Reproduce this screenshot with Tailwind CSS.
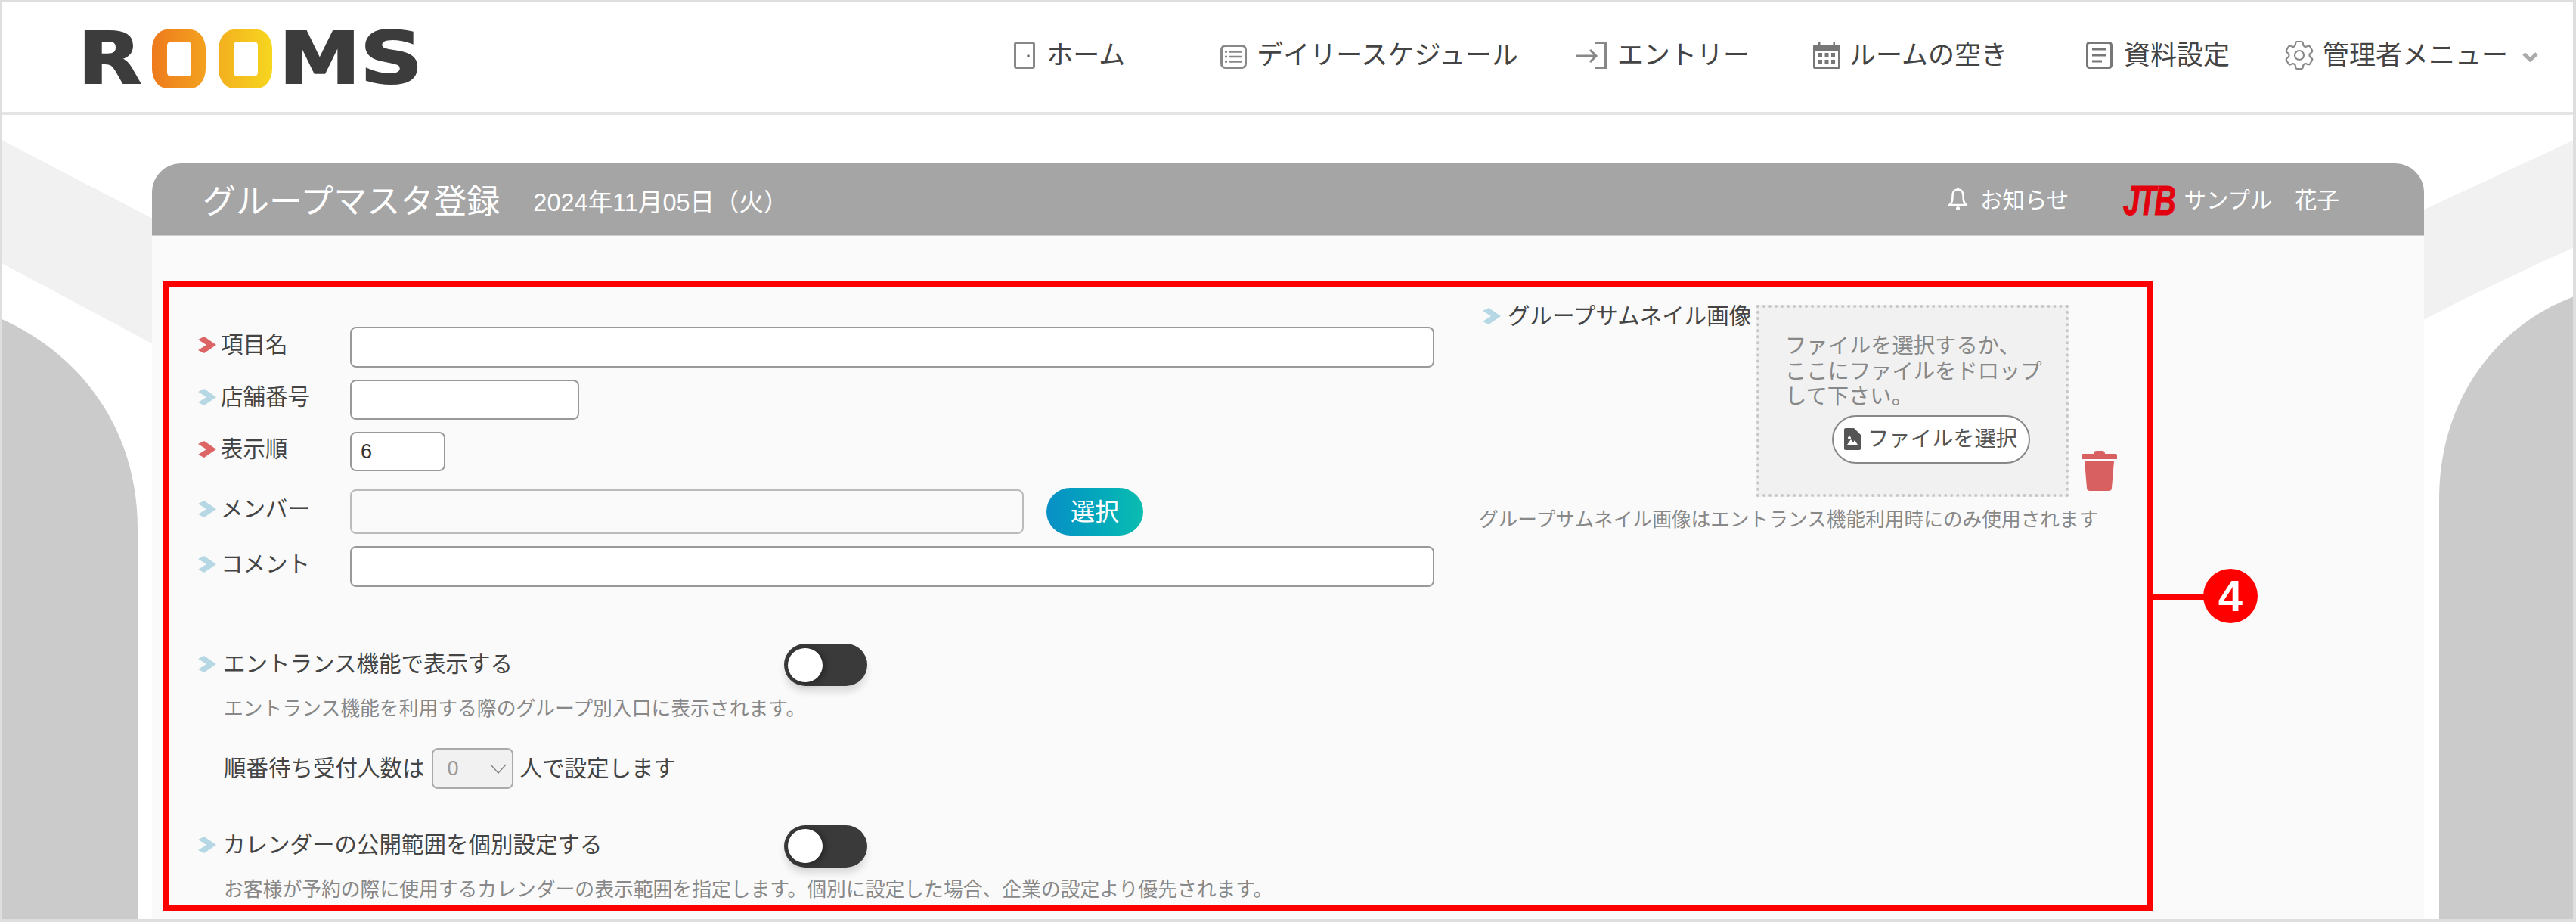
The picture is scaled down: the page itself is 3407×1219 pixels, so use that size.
<!DOCTYPE html>
<html lang="ja">
<head>
    <meta charset="UTF-8">
    <title>グループマスタ登録 | ROOMS</title>
    <script src="https://cdn.jsdelivr.net/npm/@tailwindcss/browser@4"></script>
</head>
<body class="bg-white overflow-hidden">
<div class="relative w-[3407px] h-[1219px] flex flex-col border-t-[3px] border-l-[3px] border-r-[4px] border-b-[4px] border-[#dedede] bg-white overflow-hidden text-[#444] font-['Liberation_Sans','Noto_Sans_CJK_JP',sans-serif]">

    <!-- Background shapes -->
    <svg class="absolute left-[-3px] top-[-3px] w-[3407px] h-[1219px]" viewBox="0 0 3407 1219">
        <path fill="#f1f1f1" d="M0 184L300 340V507L0 347Z"/>
        <path fill="#f1f1f1" d="M3407 184L3100 326V480Q3240 400 3407 326Z"/>
        <path fill="#cbcbcb" d="M0 421C100 465 182 560 182 700V1219H0Z"/>
        <path fill="#cbcbcb" d="M3407 391C3300 430 3226 530 3226 660V1219H3407Z"/>
    </svg>

    <!-- Navigation -->
    <header class="relative h-[149px] shrink-0 flex items-center bg-white border-b-[4px] border-[#e4e4e4] pl-[100px] pr-[46px]">
        <div class="flex items-center h-[80px] mt-[4px] font-['DejaVu_Sans',sans-serif] font-bold text-[95px] leading-none text-[#3c3c3c] [-webkit-text-stroke:2px_#3c3c3c]">
            <span class="w-[98px] scale-x-[1.15] origin-left">R</span>
            <div class="w-[71px] h-[78px] rounded-[20px/26px] bg-gradient-to-r from-[#ee7a1d] to-[#f3a11f] flex items-center justify-center">
                <div class="w-[32px] h-[46px] rounded-[5px] bg-white"></div>
            </div>
            <div class="ml-[17px] w-[71px] h-[78px] rounded-[20px/26px] bg-gradient-to-r from-[#f3b01f] to-[#f6d61f] flex items-center justify-center">
                <div class="w-[32px] h-[46px] rounded-[5px] bg-white"></div>
            </div>
            <span class="ml-[9px] w-[107px] scale-x-[1.14] origin-left">M</span>
            <span class="scale-x-[1.22] origin-left">S</span>
        </div>
        <nav class="ml-auto flex items-center pb-[6px] text-[35px] leading-none text-[#444]">
            <a class="flex items-center">
                <svg class="w-[28px] h-[36px] mr-[15px]" viewBox="0 0 28 36" fill="none" stroke="#888" stroke-width="3"><rect x="1.5" y="1.5" width="25" height="33" rx="2"/><circle cx="19" cy="19" r="1.8" fill="#666" stroke="none"/></svg>
                <span>ホーム</span>
            </a>
            <a class="flex items-center ml-[126px]">
                <svg class="w-[35px] h-[32px] mr-[13px] mt-[4px]" viewBox="0 0 35 32" fill="none" stroke="#888" stroke-width="3"><rect x="1.5" y="1.5" width="32" height="29" rx="5"/><path d="M12 9.5H28M12 16H28M12 22.5H28M6 9.5H9M6 16H9M6 22.5H9" stroke-width="2.5"/></svg>
                <span>デイリースケジュール</span>
            </a>
            <a class="flex items-center ml-[77px]">
                <svg class="w-[40px] h-[36px] mr-[14px]" viewBox="0 0 40 36" fill="none" stroke="#888" stroke-width="3"><path d="M24 1.5H38.5V34.5H24"/><path d="M0 19H26M18 11L26 19L18 27"/></svg>
                <span>エントリー</span>
            </a>
            <a class="flex items-center ml-[84px]">
                <svg class="w-[36px] h-[36px] mr-[12px]" viewBox="0 0 36 36" fill="#777"><rect x="0" y="4" width="36" height="32" rx="2"/><rect x="3" y="12" width="30" height="21" fill="#fff"/><rect x="7" y="0" width="2.5" height="7"/><rect x="26.5" y="0" width="2.5" height="7"/><path d="M7 15h5v5H7zM15.500 15h5v5h-5zM24 15h5v5h-5zM7 24h5v5H7zM15.500 24h5v5h-5zM24 24h5v5h-5z"/></svg>
                <span>ルームの空き</span>
            </a>
            <a class="flex items-center ml-[104px]">
                <svg class="w-[35px] h-[36px] mr-[15px]" viewBox="0 0 35 36" fill="none" stroke="#777" stroke-width="3"><rect x="1.5" y="1.5" width="32" height="33" rx="3"/><path d="M8 10H27M8 18H27M8 26H21"/></svg>
                <span>資料設定</span>
            </a>
            <a class="flex items-center ml-[73px]">
                <svg class="w-[38px] h-[38px] mr-[12px]" viewBox="2.500 2.500 19 19" fill="none" stroke="#888" stroke-width="1.100"><path d="M9.594 3.94c.09-.542.56-.94 1.11-.94h2.593c.55 0 1.02.398 1.11.94l.213 1.281c.063.374.313.686.645.87.074.04.147.083.22.127.325.196.72.257 1.075.124l1.217-.456a1.125 1.125 0 0 1 1.37.49l1.296 2.247a1.125 1.125 0 0 1-.26 1.431l-1.003.827c-.293.241-.438.613-.43.992a7.723 7.723 0 0 1 0 .255c-.008.378.137.75.43.991l1.004.827c.424.35.534.955.26 1.43l-1.298 2.247a1.125 1.125 0 0 1-1.369.491l-1.217-.456c-.355-.133-.75-.072-1.076.124a6.47 6.47 0 0 1-.22.128c-.331.183-.581.495-.644.869l-.213 1.281c-.09.543-.56.94-1.11.94h-2.594c-.55 0-1.019-.398-1.11-.94l-.213-1.281c-.062-.374-.312-.686-.644-.87a6.52 6.52 0 0 1-.22-.127c-.325-.196-.72-.257-1.076-.124l-1.217.456a1.125 1.125 0 0 1-1.369-.49l-1.297-2.247a1.125 1.125 0 0 1 .26-1.431l1.004-.827c.292-.24.437-.613.43-.991a6.932 6.932 0 0 1 0-.255c.007-.38-.138-.751-.43-.992l-1.004-.827a1.125 1.125 0 0 1-.26-1.43l1.297-2.247a1.125 1.125 0 0 1 1.37-.491l1.216.456c.356.133.751.072 1.076-.124.072-.044.146-.086.22-.128.332-.183.582-.495.644-.869l.214-1.28Z"/><path d="M15 12a3 3 0 1 1-6 0 3 3 0 0 1 6 0Z"/></svg>
                <span>管理者メニュー</span>
                <svg class="w-[21px] h-[13px] ml-[19px] mt-[6px]" viewBox="0 0 21 13" fill="none" stroke="#aaa" stroke-width="5"><path d="M2 2L10.500 10L19 2"/></svg>
            </a>
        </nav>
    </header>

    <!-- Main Content -->
    <main class="relative flex-1 ml-[198px] mt-[64px] w-[3005px] flex flex-col min-h-0">
        <div class="h-[96px] shrink-0 flex items-center bg-[#a5a5a5] border-b border-[#ccc] rounded-t-[38px] pl-[67px] pr-[112px] text-white">
            <h1 class="text-[44px] leading-none mt-[6px]">グループマスタ登録</h1>
            <span class="ml-[44px] text-[32.500px] leading-none mt-[10px]">2024年11月05日（火）</span>
            <div class="ml-auto flex items-center text-[29.500px] leading-none mt-[2px]">
                <svg class="w-[27px] h-[31px] mr-[16px] mb-[4px]" viewBox="0 0 27 31" fill="none" stroke="#fff" stroke-width="2.500"><path d="M2 24C6 22 6.500 18 6.500 12C6.500 6.500 9 3.500 13.500 3.500C18 3.500 20.500 6.500 20.500 12C20.500 18 21 22 25 24Z" stroke-linejoin="round"/><circle cx="13.500" cy="2" r="1.500" fill="#fff" stroke="none"/><circle cx="13.500" cy="28.500" r="2.500" fill="#fff" stroke="none"/></svg>
                <span>お知らせ</span>
                <span class="ml-[72px] w-[80px] text-[56px] font-bold italic tracking-[-3px] text-[#e2000f] [-webkit-text-stroke:1px_#e2000f] scale-x-[0.7] origin-left">JTB</span>
                <span>サンプル　花子</span>
            </div>
        </div>

        <div class="flex-1 bg-[#fafafa] pt-[59px] pl-[15px] pb-[10px] min-h-0">
            <section class="relative w-[2631px] h-[834px] border-[8px] border-[#ff0000] flex text-[29.500px] leading-none">

                <!-- Annotation -->
                <div class="absolute left-[calc(100%+8px)] top-[406px] w-[70px] h-[8px] bg-[#ff0000]"></div>
                <div class="absolute left-[calc(100%+75px)] top-[373px] w-[72px] h-[72px] rounded-full bg-[#ff0000] flex items-center justify-center text-white font-bold text-[58px] font-['Liberation_Sans',sans-serif]">4</div>

                <!-- Left column -->
                <div class="w-[1673px] shrink-0 pt-[53px] pl-[38px]">
                    <div class="flex items-center h-[54px]">
                        <div class="w-[201px] flex items-center pb-[7px]">
                            <svg class="w-[24px] h-[24px]" viewBox="0 0 24 24" fill="#dc6464"><path d="M0 5L8 1L24 12L8 23L0 19L11 12Z"/></svg>
                            <label class="ml-[6px]">項目名</label>
                        </div>
                        <input class="w-[1434px] h-[54px] bg-white border-2 border-[#999] rounded-[8px]">
                    </div>
                    <div class="flex items-center h-[53px] mt-[16px]">
                        <div class="w-[201px] flex items-center pb-[7px]">
                            <svg class="w-[24px] h-[24px]" viewBox="0 0 24 24" fill="#b5d8e4"><path d="M0 5L8 1L24 12L8 23L0 19L11 12Z"/></svg>
                            <label class="ml-[6px]">店舗番号</label>
                        </div>
                        <input class="w-[303px] h-[53px] bg-white border-2 border-[#999] rounded-[8px]">
                    </div>
                    <div class="flex items-center h-[52px] mt-[16px]">
                        <div class="w-[201px] flex items-center pb-[7px]">
                            <svg class="w-[24px] h-[24px]" viewBox="0 0 24 24" fill="#dc6464"><path d="M0 5L8 1L24 12L8 23L0 19L11 12Z"/></svg>
                            <label class="ml-[6px]">表示順</label>
                        </div>
                        <input class="w-[126px] h-[52px] pl-[12px] bg-white border-2 border-[#999] rounded-[8px] text-[27px] text-[#333]" value="6">
                    </div>
                    <div class="flex items-center h-[59px] mt-[24px]">
                        <div class="w-[201px] flex items-center pb-[7px]">
                            <svg class="w-[24px] h-[24px]" viewBox="0 0 24 24" fill="#b5d8e4"><path d="M0 5L8 1L24 12L8 23L0 19L11 12Z"/></svg>
                            <label class="ml-[6px]">メンバー</label>
                        </div>
                        <input disabled class="w-[891px] h-[59px] bg-[#fafafa] border-2 border-[#bbb] rounded-[8px]">
                        <button class="ml-[30px] w-[128px] h-[63px] rounded-full bg-gradient-to-r from-[#0a8fc6] to-[#0cbdb0] text-white text-[32px]">選択</button>
                    </div>
                    <div class="flex items-center h-[54px] mt-[16px]">
                        <div class="w-[201px] flex items-center pb-[7px]">
                            <svg class="w-[24px] h-[24px]" viewBox="0 0 24 24" fill="#b5d8e4"><path d="M0 5L8 1L24 12L8 23L0 19L11 12Z"/></svg>
                            <label class="ml-[6px]">コメント</label>
                        </div>
                        <input class="w-[1434px] h-[54px] bg-white border-2 border-[#999] rounded-[8px]">
                    </div>

                    <div class="flex items-center h-[56px] mt-[75px]">
                        <div class="w-[775px] flex items-center pb-[3px]">
                            <svg class="w-[24px] h-[24px]" viewBox="0 0 24 24" fill="#b5d8e4"><path d="M0 5L8 1L24 12L8 23L0 19L11 12Z"/></svg>
                            <span class="ml-[9px]">エントランス機能で表示する</span>
                        </div>
                        <div class="w-[110px] h-[56px] rounded-full bg-[#3a3a3a] flex items-center pl-[5px] shadow-[0_8px_10px_rgba(0,0,0,0.12)]">
                            <div class="w-[46px] h-[45px] rounded-full bg-white shadow-[3px_1px_8px_rgba(0,0,0,0.4)]"></div>
                        </div>
                    </div>
                    <p class="mt-[12px] ml-[34px] text-[25.800px] leading-[36px] text-[#888]">エントランス機能を利用する際のグループ別入口に表示されます。</p>
                    <div class="flex items-center h-[54px] mt-[34px] ml-[34px]">
                        <span>順番待ち受付人数は</span>
                        <div class="relative ml-[9px] mr-[9px] w-[108px] h-[54px]">
                            <select disabled class="w-full h-full appearance-none bg-[#f1f1f1] border-2 border-[#aaa] rounded-[8px] pl-[19px] text-[27px] text-[#999] opacity-100"><option>0</option></select>
                            <svg class="absolute left-[77px] top-[21px] w-[22px] h-[13px]" viewBox="0 0 22 13" fill="none" stroke="#888" stroke-width="1.500"><path d="M1 1L11 12L21 1"/></svg>
                        </div>
                        <span>人で設定します</span>
                    </div>
                    <div class="flex items-center h-[57px] mt-[47px]">
                        <div class="w-[775px] flex items-center pb-[3px]">
                            <svg class="w-[24px] h-[24px]" viewBox="0 0 24 24" fill="#b5d8e4"><path d="M0 5L8 1L24 12L8 23L0 19L11 12Z"/></svg>
                            <span class="ml-[9px]">カレンダーの公開範囲を個別設定する</span>
                        </div>
                        <div class="w-[110px] h-[56px] rounded-full bg-[#3a3a3a] flex items-center pl-[5px] shadow-[0_8px_10px_rgba(0,0,0,0.12)]">
                            <div class="w-[46px] h-[45px] rounded-full bg-white shadow-[3px_1px_8px_rgba(0,0,0,0.4)]"></div>
                        </div>
                    </div>
                    <p class="mt-[11px] ml-[34px] text-[25.800px] leading-[36px] text-[#888] whitespace-nowrap">お客様が予約の際に使用するカレンダーの表示範囲を指定します。個別に設定した場合、企業の設定より優先されます。</p>
                </div>

                <!-- Right column -->
                <div class="ml-[59px] pt-[24px]">
                    <div class="flex items-end">
                        <div class="self-start w-[367px] pl-[5px] flex items-center h-[29px]">
                            <svg class="w-[24px] h-[24px]" viewBox="0 0 24 24" fill="#b5d8e4"><path d="M0 5L8 1L24 12L8 23L0 19L11 12Z"/></svg>
                            <span class="ml-[9px] whitespace-nowrap">グループサムネイル画像</span>
                        </div>
                        <div class="w-[413px] h-[254px] bg-[#f1f1f1] border-[4px] border-dotted border-[#c6c6c6] pt-[34px] pl-[34px]">
                            <p class="text-[28.300px] leading-[33.500px] text-[#888] whitespace-nowrap">ファイルを選択するか、<br>ここにファイルをドロップ<br>して下さい。</p>
                            <button class="mt-[7px] ml-[62px] w-[262px] h-[64px] flex items-center rounded-full bg-white border-2 border-[#888] pl-[14px] text-[28.300px] text-[#555]">
                                <svg class="w-[22px] h-[29px] mr-[9px] shrink-0" viewBox="0 0 22 29" fill="#555"><path d="M0 2Q0 0 2 0H13L22 9V27Q22 29 20 29H2Q0 29 0 27Z"/><path fill="#fff" d="M4 22L9 15L12 19L14 16L18 22ZM7 11a2 2 0 1 0 .01 0Z"/></svg>
                                <span class="whitespace-nowrap">ファイルを選択</span>
                            </button>
                        </div>
                        <svg class="w-[47px] h-[53px] ml-[17px] mb-[8px]" viewBox="0 0 47 53" fill="#d96060"><path d="M16 4Q16 0 20 0H27Q31 0 31 4H45Q47 4 47 6V11H0V6Q0 4 2 4Z"/><path d="M4 14H43L40 49Q40 53 36 53H11Q7 53 7 49Z"/></svg>
                    </div>
                    <p class="mt-[12px] text-[25.700px] leading-[36px] text-[#888] whitespace-nowrap">グループサムネイル画像はエントランス機能利用時にのみ使用されます</p>
                </div>
            </section>
        </div>
    </main>
</div>
</body>
</html>
